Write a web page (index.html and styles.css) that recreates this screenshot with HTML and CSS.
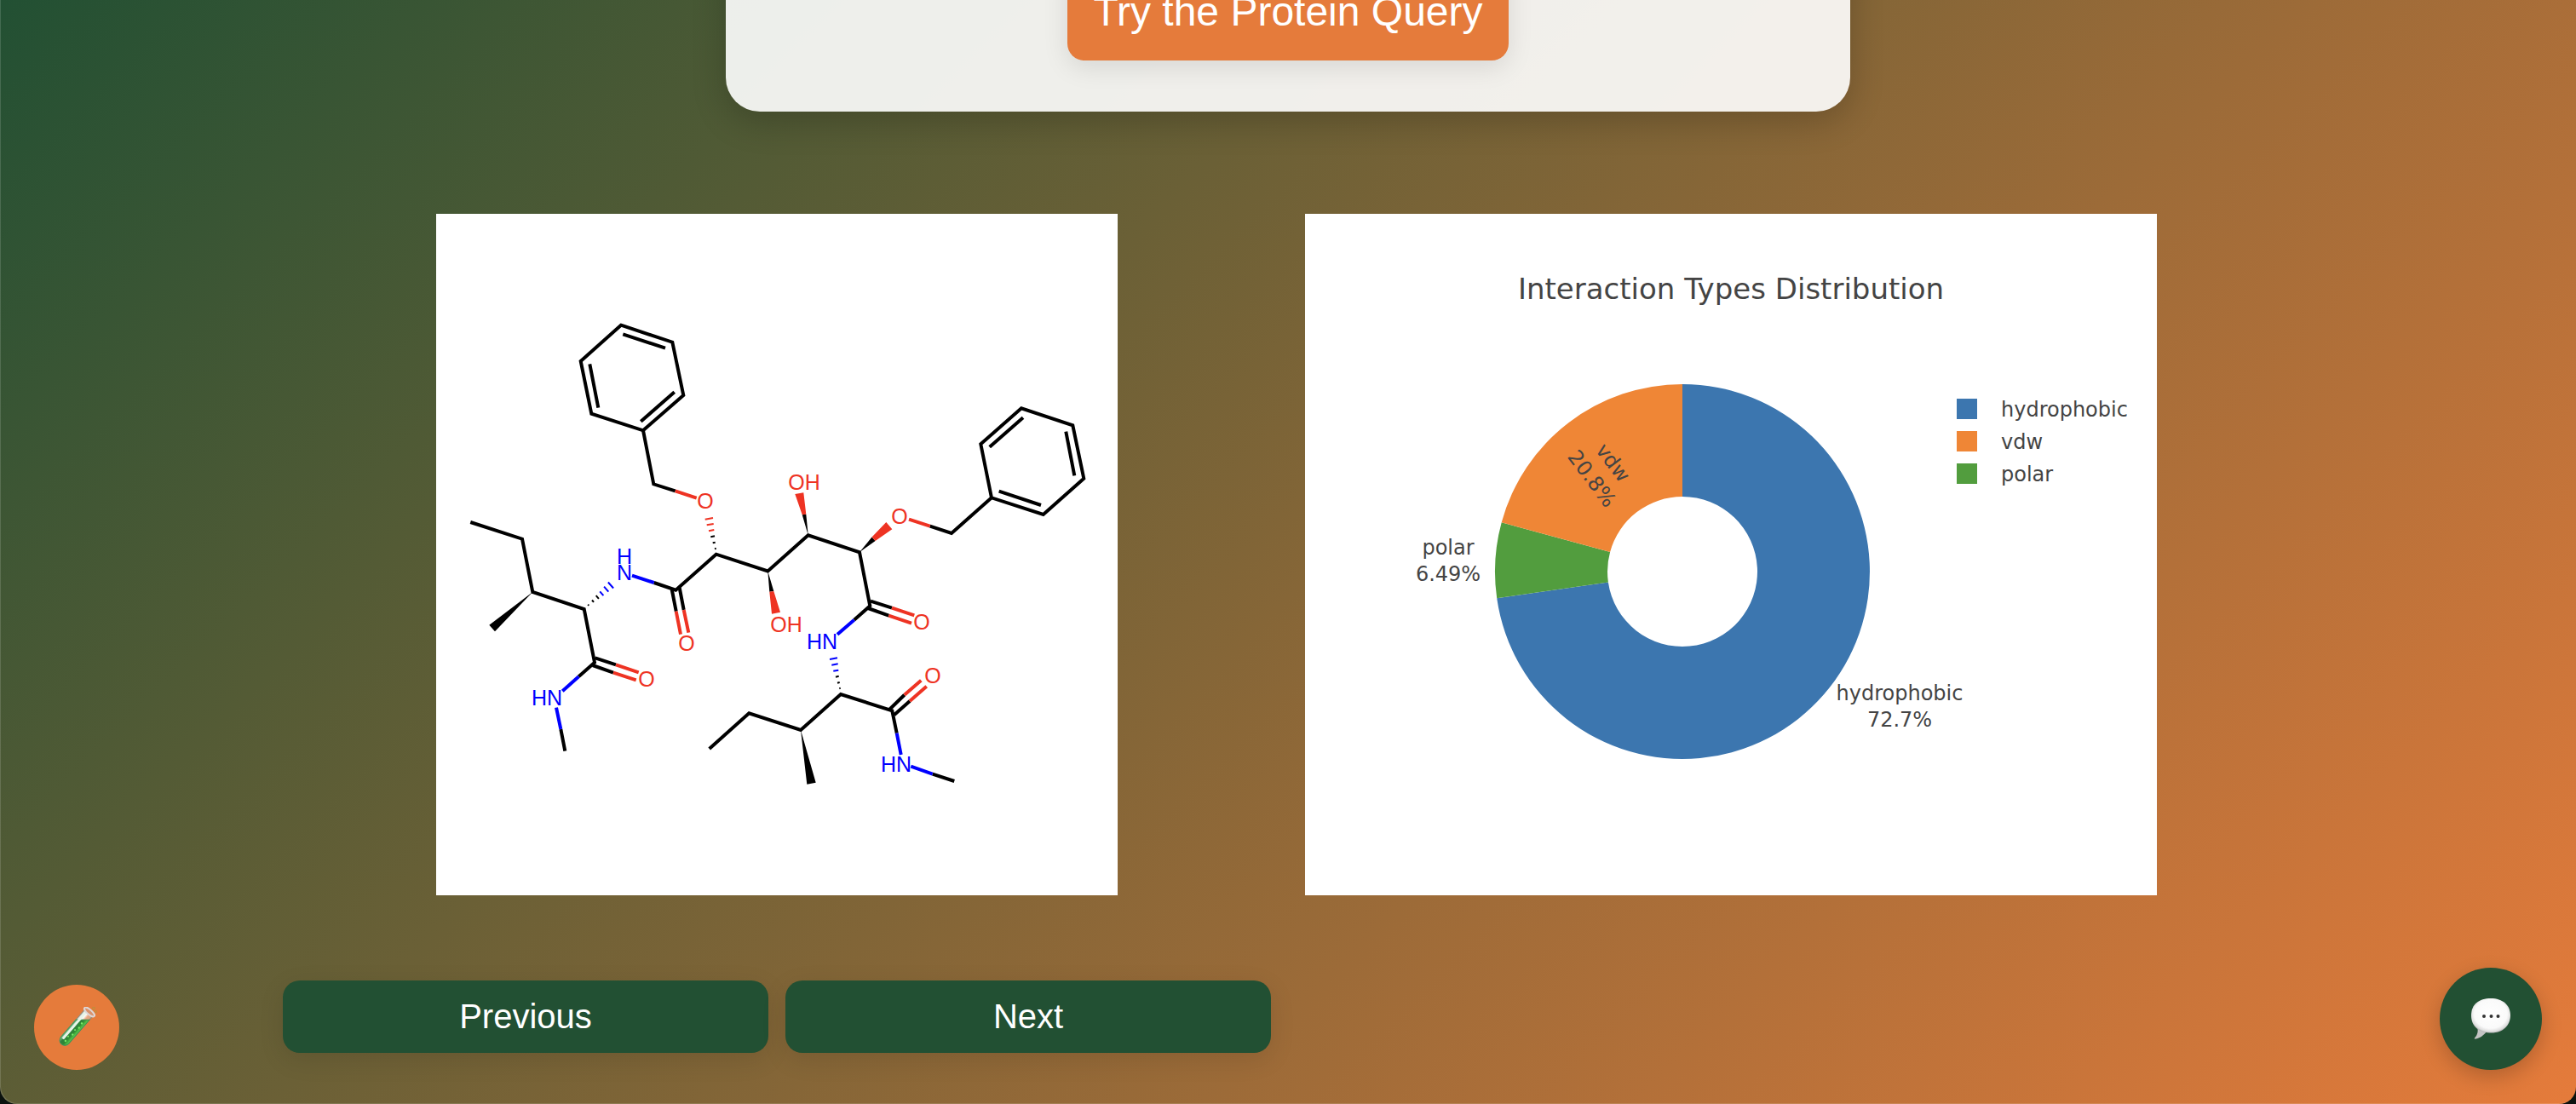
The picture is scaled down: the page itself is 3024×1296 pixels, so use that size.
FILE: index.html
```html
<!DOCTYPE html>
<html lang="en">
<head>
<meta charset="utf-8">
<meta name="viewport" content="width=device-width, initial-scale=1">
<title>Protein Query</title>
<link rel="stylesheet" href="styles.css">
</head>
<body>
<div class="page">
  <header class="hero">
    <button type="button" class="btn btn-hero">Try the Protein Query</button>
  </header>

  <main class="results">
    <figure class="panel panel-molecule">
      <svg viewBox="0 0 800 800" role="img" aria-label="Ligand structure">
        <!-- carbon skeleton -->
        <g class="bond">
          <path d="M217 130.7 277.3 150.7 290.3 213 243 254.3 182.3 234.7 169.7 173Z"/>
          <path d="M219.3 141.3 269 157.7M279.7 209.3 240.3 243.7M190.3 227.7 180.3 176.3"/>
          <path d="M243 254.3 255.3 317.3 280.7 325.3"/>
          <path d="M40.3 362 101 381.7 113.3 444 173.7 464 186 526.7 167.3 543.3"/>
          <path d="M186.7 521.3 211 529.3M183.7 530 208 538.7M146.3 605 151.3 630.7"/>
          <path d="M255.7 433 281.3 441.7 328.7 399.7 389.3 419.5 436.7 377.3 497 397.3 509.3 460.3 490.7 476.7"/>
          <path d="M276.7 441 281.7 466.7M285.7 439 290.7 465"/>
          <path d="M510 454.7 535 462.7M507 463 531.3 471.7"/>
          <path d="M579.7 366.7 605 375 652 333.3"/>
          <path d="M652 333.3 639.3 270.3 687 228.3 747.3 248.3 760.3 310.7 712.7 353Z"/>
          <path d="M649.7 273.7 689 239.3M739.3 255.7 749.3 307.3M660.7 325.7 710 342"/>
          <path d="M320.7 628 367.3 586.3 428 606 475 564 535.3 583.3 540.7 609.7"/>
          <path d="M532 582 549.7 564.7M537.7 588.3 556 572M582.7 657.7 608.3 666"/>
        </g>
        <!-- half bonds towards oxygen -->
        <g class="bond bond-o">
          <path d="M280.7 325.3 305.7 333.7M211 529.3 237.7 538.3M208 538.7 234.7 547.3"/>
          <path d="M281.7 466.7 287 493.7M290.7 465 296.3 491.7M555 358.7 579.7 366.7"/>
          <path d="M535 462.7 561.3 471.3M531.3 471.7 558 480.7M549.7 564.7 569.3 547.7M556 572 575.7 554.7"/>
        </g>
        <!-- half bonds towards nitrogen -->
        <g class="bond bond-n">
          <path d="M230 424.7 255.7 433M167.3 543.3 148.3 560.3M141 579.7 146.3 605"/>
          <path d="M490.7 476.7 471 493.7M540.7 609.7 545.7 635M557.3 648.7 582.7 657.7"/>
        </g>
        <!-- solid wedges -->
        <g>
          <path d="M113.3 444 62.3 482.7 69 490.3ZM428 606 435.3 669.7 445.7 667.7Z"/>
          <path d="M389.3 419.3 391.3 443.7 396.3 443ZM436.7 377.3 429.7 353.3 434.3 352.7ZM497 397.3 511.5 379.5 515.5 384Z"/>
          <path class="fill-o" d="M391.3 443.7 396.3 443 404 467.7 394 469.7ZM429.7 353.3 434.3 352.7 431.3 327.3 421.3 329ZM511.5 379.5 515.5 384 535.3 370.3 528.3 362Z"/>
        </g>
        <!-- hashed wedges -->
        <g class="bond hash">
          <path d="M322.3 379.3 327 378.3M324.7 386.3 327.7 385.7M327 393.3 328.7 392.7"/>
          <path d="M178.2 458.7 179.2 459.9M183 453.5 185 455.9M187.7 448.2 190.9 451.8"/>
          <path d="M469 543.7 472.7 542.7M471 550.7 473.7 550M473.3 557.3 474.7 556.7"/>
          <path class="bond-o" d="M315.7 358.7 325 357M317.7 365.3 325.7 364M320 372.3 326.3 371"/>
          <path class="bond-n" d="M192.2 443.3 196.4 448.1M197.1 437.7 202.3 443.7M201.9 432.5 208.1 439.5"/>
          <path class="bond-n" d="M462 523 471 521.3M464.3 529.7 471.7 528.3M466.3 536.7 472.3 535.7"/>
        </g>
        <g class="atom fill-o">
          <text x="316" y="346">O</text>
          <text x="294" y="513">O</text>
          <text x="247" y="555">O</text>
          <text x="544" y="364">O</text>
          <text x="570" y="488">O</text>
          <text x="583" y="551">O</text>
          <text x="432" y="324">OH</text>
          <text x="411" y="491">OH</text>
        </g>
        <g class="atom fill-n">
          <text x="221" y="411">H</text>
          <text x="221" y="430">N</text>
          <text x="130" y="577">HN</text>
          <text x="453" y="511">HN</text>
          <text x="540" y="655">HN</text>
        </g>
      </svg>
    </figure>

    <figure class="panel panel-chart">
      <svg viewBox="0 0 1000 800" role="img" aria-label="Interaction Types Distribution">
        <text class="chart-title" x="500" y="100">Interaction Types Distribution</text>
        <g transform="translate(443 420)">
          <path class="s-hydrophobic" d="M0-220A220 220 0 1 1-217.8 31.3L-87.1 12.5A88 88 0 1 0 0-88Z"/>
          <path class="s-polar" d="M-217.8 31.3A220 220 0 0 1-212.3-57.7L-84.9-23.1A88 88 0 0 0-87.1 12.5Z"/>
          <path class="s-vdw" d="M-212.3-57.7A220 220 0 0 1 0-220L0-88A88 88 0 0 0-84.9-23.1Z"/>
        </g>
        <g class="label">
          <text x="168" y="400">polar</text>
          <text x="168" y="431">6.49%</text>
          <text x="698" y="571">hydrophobic</text>
          <text x="698" y="602">72.7%</text>
          <g transform="translate(355 297) rotate(53)">
            <text x="0" y="0">vdw</text>
            <text x="0" y="31">20.8%</text>
          </g>
        </g>
        <g class="legend">
          <rect class="s-hydrophobic" x="765" y="217" width="24" height="24"/>
          <text x="817" y="238">hydrophobic</text>
          <rect class="s-vdw" x="765" y="255" width="24" height="24"/>
          <text x="817" y="276">vdw</text>
          <rect class="s-polar" x="765" y="293" width="24" height="24"/>
          <text x="817" y="314">polar</text>
        </g>
      </svg>
    </figure>

    <nav class="pager" aria-label="Results">
      <button type="button" class="btn btn-page">Previous</button>
      <button type="button" class="btn btn-page">Next</button>
    </nav>
  </main>

  <button type="button" class="fab fab-lab" aria-label="Lab tools">
    <svg viewBox="0 0 48 48" width="48" height="48">
      <defs>
        <linearGradient id="liquid" x1="0" x2="1"><stop offset="0" stop-color="#8fd0a0"/><stop offset=".3" stop-color="#2f7f3c"/><stop offset=".65" stop-color="#2f8a35"/><stop offset="1" stop-color="#5fd84a"/></linearGradient>
        <linearGradient id="glass" x1="0" x2="1"><stop offset="0" stop-color="#d8d4d0"/><stop offset=".4" stop-color="#fff"/><stop offset=".65" stop-color="#e9a982"/><stop offset="1" stop-color="#d8a080"/></linearGradient>
      </defs>
      <g transform="translate(39 6) rotate(41)">
        <path d="M-6 0V44A6 6 0 0 0 6 44V0Z" fill="url(#glass)" stroke="#8a8f80" stroke-width="1"/>
        <path d="M-6 17 6 7V44A6 6 0 0 1-6 44Z" fill="url(#liquid)" stroke="#3f8f50" stroke-width="1"/>
        <path d="M-3 3V43" stroke="#e6f5e8" stroke-width="3" stroke-linecap="round"/>
        <ellipse cx="0" cy="0" rx="7.500" ry="2.800" fill="#d9916b" stroke="#ddd6d6" stroke-width="2"/>
        <g fill="#7be86a"><circle cx="2" cy="16" r="1.200"/><circle cx="3" cy="22" r="1.200"/><circle cx="1" cy="27" r="1"/><circle cx="2.500" cy="33" r="1.200"/><circle cx="0" cy="38" r="1"/><circle cx="1" cy="44" r="1.200"/></g>
      </g>
      <g fill="none" stroke="#b5943c" stroke-width="1"><circle cx="44" cy="1.500" r="1.500"/><circle cx="46.500" cy="5.500" r="1"/></g>
    </svg>
  </button>
  <button type="button" class="fab fab-chat" aria-label="Open chat">
    <svg viewBox="0 0 48 48" width="48" height="48">
      <defs>
        <radialGradient id="bubble" cx=".5" cy=".45" r=".56"><stop offset="0" stop-color="#fff"/><stop offset=".75" stop-color="#fafafa"/><stop offset=".92" stop-color="#ddd"/><stop offset="1" stop-color="#aaa"/></radialGradient>
      </defs>
      <path d="M8 34C9.500 38 8.500 43 5 46.500C4.500 47.500 5 48 6 47.600C11 47 15.500 43.500 20 38Z" fill="#c4c4c4"/>
      <path d="M24 0C38 0 47 8 47 20S38 40.500 25 40.500C10 40.500 1 33 1 20S10 0 24 0Z" fill="url(#bubble)"/>
      <g fill="#333"><circle cx="16" cy="21" r="2"/><circle cx="24.500" cy="21" r="2"/><circle cx="32.500" cy="21" r="2"/></g>
    </svg>
  </button>
</div>
</body>
</html>
```
FILE: styles.css
```css
* {
  box-sizing: border-box;
}

html {
  background: #0b120e;
}

body {
  margin: 0;
  font-family: "Liberation Sans", Arial, Helvetica, sans-serif;
}

.page {
  display: flex;
  flex-direction: column;
  align-items: center;
  gap: 120px;
  min-height: 100vh;
  padding: 0 40px 60px;
  overflow: hidden;
  border-radius: 0 0 20px 20px;
  background: linear-gradient(135deg, #225033, #e57b3b);
  box-shadow: inset 1px -1px 0 rgba(255, 255, 255, 0.15);
}

/* Hero card continues above the top edge of the view */
.hero {
  display: flex;
  justify-content: center;
  width: 100%;
  max-width: 1320px;
  margin-top: -104px;
  padding: 60px;
  border-radius: 40px;
  background: rgba(255, 255, 255, 0.9);
  box-shadow: 0 12px 40px rgba(0, 0, 0, 0.2);
}

.btn {
  border: 0;
  border-radius: 20px;
  color: #fff;
  font-family: inherit;
  cursor: pointer;
}

.btn-hero {
  padding: 30px;
  background: #e57b3b;
  box-shadow: 0 8px 30px rgba(0, 0, 0, 0.1);
  font-size: 48px;
  line-height: 55px;
}

.btn-page {
  flex: 1;
  padding: 20px;
  background: #225033;
  box-shadow: 0 8px 30px rgba(0, 0, 0, 0.1);
  font-size: 40px;
  line-height: 45px;
}

.results {
  display: grid;
  grid-template-columns: 1fr 1fr;
  column-gap: 40px;
  row-gap: 100px;
  width: 100%;
  max-width: 2360px;
}

.panel {
  width: 100%;
  margin: 0;
  background: #fff;
}

.panel svg {
  display: block;
  width: 100%;
}

.panel-molecule {
  max-width: 800px;
  justify-self: center;
}

.panel-chart {
  max-width: 1000px;
}

.pager {
  display: flex;
  gap: 20px;
}

.bond {
  fill: none;
  stroke: #000;
  stroke-width: 4px;
}

.hash {
  stroke-width: 2px;
}

.bond-o {
  stroke: #ee3323;
}

.bond-n {
  stroke: #00f;
}

.fill-o {
  fill: #ee3323;
}

.fill-n {
  fill: #00f;
}

.atom {
  font-size: 25px;
  text-anchor: middle;
}

.chart-title,
.label,
.legend {
  fill: #444;
  font-family: Verdana, "DejaVu Sans", sans-serif;
  font-size: 24px;
}

.chart-title {
  font-size: 34px;
}

.chart-title,
.label {
  text-anchor: middle;
}

.s-hydrophobic {
  fill: #3c76af;
}

.s-vdw {
  fill: #ef8636;
}

.s-polar {
  fill: #529d3e;
}

.fab {
  position: fixed;
  bottom: 40px;
  display: flex;
  align-items: center;
  justify-content: center;
  padding: 0;
  border: 0;
  border-radius: 50%;
  cursor: pointer;
}

.fab-lab {
  left: 40px;
  width: 100px;
  height: 100px;
  background: #e57b3b;
}

.fab-chat {
  right: 40px;
  width: 120px;
  height: 120px;
  background: #225033;
  box-shadow: 0 8px 24px rgba(0, 0, 0, 0.2);
}
```
